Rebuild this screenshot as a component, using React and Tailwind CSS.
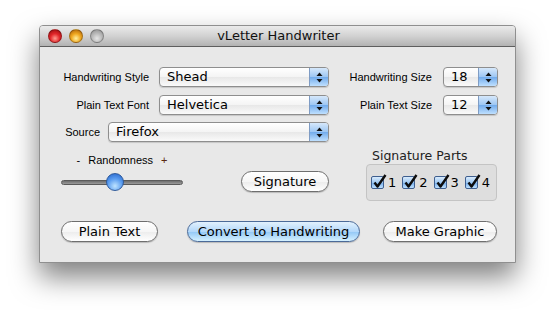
import React from "react";

const font = { fontFamily: '"DejaVu Sans", "Liberation Sans", sans-serif' };
const small = { fontFamily: '"Liberation Sans", Arial, sans-serif' };

function Arrows() {
  return (
    <svg width="7" height="11" viewBox="0 0 7 11">
      <path d="M3.5 0.5 L6.5 4 L0.5 4 Z" fill="#111" />
      <path d="M3.5 10.5 L6.5 7 L0.5 7 Z" fill="#111" />
    </svg>
  );
}

function Popup({ value, width }) {
  return (
    <div
      className={`${width} h-[20px] flex items-stretch rounded-[4px] border border-[#8e8e8e] overflow-hidden shadow-[0_1px_1px_rgba(0,0,0,0.15)] bg-[linear-gradient(to_bottom,#ffffff_0%,#f4f4f4_50%,#e8e8e8_52%,#fafafa_100%)]`}
    >
      <div className="flex-1 flex items-center pl-[7px] text-[13px] text-black">{value}</div>
      <div className="w-[19px] flex items-center justify-center border-l border-[#7f9cc4] bg-[linear-gradient(to_bottom,#d6e8fb_0%,#9cc6f3_50%,#73acec_52%,#bfe0ff_100%)]">
        <Arrows />
      </div>
    </div>
  );
}

function PillButton({ children, width, blue }) {
  return (
    <div
      className={`${width} h-[21px] rounded-full flex items-center justify-center text-[13px] text-black border ${
        blue
          ? "border-[#4b6a98] bg-[linear-gradient(to_bottom,#e2f1fd_0%,#b3d8fa_50%,#93c8f6_52%,#d5f1ff_100%)]"
          : "border-[#6e6e6e] bg-[linear-gradient(to_bottom,#ffffff_0%,#f6f6f6_50%,#ececec_52%,#ffffff_100%)]"
      } shadow-[0_1px_1px_rgba(0,0,0,0.2)]`}
    >
      {children}
    </div>
  );
}

function Check({ n }) {
  return (
    <div className="flex items-center">
      <div className="relative w-[13px] h-[13px] rounded-[2px] border border-[#3f5f8f] bg-[linear-gradient(to_bottom,#d9ebfc_0%,#9ec8f2_50%,#74acea_52%,#bde0ff_100%)]">
        <svg className="absolute -top-[3px] left-[1px]" width="14" height="15" viewBox="0 0 14 15">
          <path d="M1.5 8.5 L4.5 12.5 L12.5 1" stroke="#0c0c0c" strokeWidth="2.4" fill="none" strokeLinejoin="round" />
        </svg>
      </div>
      <span className="ml-[4px] text-[13px] text-black">{n}</span>
    </div>
  );
}

function Light({ bg }) {
  return <div className={`w-[14px] h-[14px] rounded-full border border-[#00000040] ${bg}`} />;
}

function Label({ children, width }) {
  return (
    <div className={`${width} text-right text-[11px] text-black`} style={small}>
      {children}
    </div>
  );
}

export default function App() {
  return (
    <div className="w-[556px] h-[318px] bg-white pl-[39px] pt-[25px]" style={font}>
      <div className="w-[477px] h-[238px] flex flex-col rounded-t-[4px] border border-[#8f8f8f] shadow-[0_14px_28px_rgba(0,0,0,0.5)] overflow-hidden bg-[#e8e8e8]">
        {/* title bar */}
        <div className="relative h-[21px] shrink-0 flex items-center border-b border-[#5e5e5e] bg-[linear-gradient(to_bottom,#ebebeb_0%,#d2d2d2_50%,#b2b2b2_100%)]">
          <div className="flex items-center gap-[7px] pl-[8px]">
            <Light bg="bg-[radial-gradient(circle_at_50%_70%,#ff9b8f_0%,#e2262a_45%,#8e0a0c_100%)]" />
            <Light bg="bg-[radial-gradient(circle_at_50%_70%,#fff0a0_0%,#f0a820_45%,#a55a08_100%)]" />
            <Light bg="bg-[radial-gradient(circle_at_50%_70%,#e6e6e6_0%,#b8b8b8_50%,#8c8c8c_100%)]" />
          </div>
          <div className="flex-1 text-center text-[13px] text-[#111] pr-[62px]">vLetter Handwriter</div>
        </div>

        {/* body */}
        <div className="flex flex-col pt-[20px]">
          <div className="flex items-center">
            <Label width="w-[109px]">Handwriting Style</Label>
            <div className="ml-[10px]"><Popup value="Shead" width="w-[170px]" /></div>
            <Label width="w-[103px]">Handwriting Size</Label>
            <div className="ml-[11px]"><Popup value="18" width="w-[55px]" /></div>
          </div>
          <div className="flex items-center mt-[8px]">
            <Label width="w-[109px]">Plain Text Font</Label>
            <div className="ml-[10px]"><Popup value="Helvetica" width="w-[170px]" /></div>
            <Label width="w-[103px]">Plain Text Size</Label>
            <div className="ml-[11px]"><Popup value="12" width="w-[55px]" /></div>
          </div>
          <div className="flex items-center mt-[7px]">
            <Label width="w-[60px]">Source</Label>
            <div className="ml-[8px]"><Popup value="Firefox" width="w-[221px]" /></div>
          </div>

          {/* middle */}
          <div className="flex mt-[7px]">
            <div className="ml-[21px] w-[122px] flex flex-col items-center">
              <div className="mt-[4px] h-[14px] flex items-center text-[11px] text-black" style={small}>
                <span className="mr-[8px]">-</span>
                <span>Randomness</span>
                <span className="ml-[8px] text-[#5a2a10]">+</span>
              </div>
              <div className="relative w-[122px] h-[18px] mt-[6px] flex items-center">
                <div className="w-full h-[5px] rounded-full border border-[#5a5a5a] bg-[linear-gradient(to_bottom,#6e6e6e_0%,#9a9a9a_100%)]" />
                <div className="absolute left-[45px] top-[0px] w-[18px] h-[18px] rounded-full border border-[#2f5a9a] bg-[radial-gradient(circle_at_50%_75%,#bfe4ff_0%,#5b9df0_50%,#1f5fc8_100%)]" />
              </div>
            </div>
            <div className="ml-[58px] mt-[22px]">
              <PillButton width="w-[88px]">Signature</PillButton>
            </div>
            <div className="ml-[37px] flex flex-col">
              <div className="h-[14px] pl-[6px] flex items-center text-[12.5px] text-[#222]">Signature Parts</div>
              <div className="mt-[1px] w-[131px] h-[37px] rounded-[4px] border border-[#c4c4c4] bg-[#dedede] flex items-center gap-[6px] pl-[4px]">
                <Check n="1" />
                <Check n="2" />
                <Check n="3" />
                <Check n="4" />
              </div>
            </div>
          </div>

          {/* bottom buttons */}
          <div className="flex items-center mt-[20px] pl-[21px]">
            <PillButton width="w-[97px]">Plain Text</PillButton>
            <div className="ml-[29px]">
              <PillButton width="w-[173px]" blue>Convert to Handwriting</PillButton>
            </div>
            <div className="ml-[23px]">
              <PillButton width="w-[114px]">Make Graphic</PillButton>
            </div>
          </div>
        </div>
      </div>
    </div>
  );
}
